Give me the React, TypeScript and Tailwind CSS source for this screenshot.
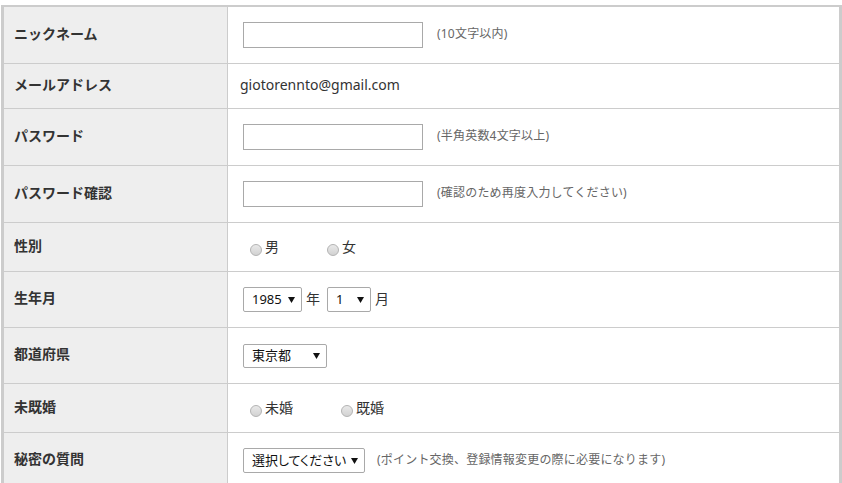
import React from "react";

const font = { fontFamily: '"Noto Sans", "Noto Sans CJK JP", sans-serif' };

function Arrow() {
  return (
    <svg width="7" height="6" viewBox="0 0 7 6" className="shrink-0">
      <polygon points="0,0 7,0 3.5,6" fill="#111" />
    </svg>
  );
}

function Select({ value, w, h = "h-[25px]", pal = false }: { value: string; w: string; h?: string; pal?: boolean }) {
  return (
    <div
      className={`${w} ${h} flex items-center justify-between pl-[8px] pr-[6px] border border-[#a9a9a9] rounded-[2px] bg-white text-[13px] text-[#111]`}
    >
      <span className={`leading-none whitespace-nowrap ${pal ? "[font-feature-settings:'palt']" : ""}`}>{value}</span>
      <Arrow />
    </div>
  );
}

function Radio({ label }: { label: string }) {
  return (
    <label className="flex items-center">
      <span className="w-[12px] h-[12px] rounded-full border border-[#b3b3b3] bg-gradient-to-b from-[#e9e9e9] to-[#d2d2d2] translate-y-[3px]" />
      <span className="ml-[3px] text-[14px] text-[#333] -translate-y-[1px]">{label}</span>
    </label>
  );
}

function TextInput() {
  return <div className="w-[180px] h-[26px] border border-[#a9a9a9] bg-white" />;
}

function Note({ children, ml = "ml-[14px]" }: { children: React.ReactNode; ml?: string }) {
  return <span className={`${ml} text-[12px] text-[#666] tracking-[0.2px] -translate-y-[1px]`}>{children}</span>;
}

const rows: { label: string; h: string; content: React.ReactNode }[] = [
  {
    label: "ニックネーム",
    h: "h-[57px]",
    content: (
      <>
        <TextInput />
        <Note>(10文字以内)</Note>
      </>
    ),
  },
  {
    label: "メールアドレス",
    h: "h-[45px]",
    content: <span className="-ml-[3px] text-[14px] text-[#333] -translate-y-[2px]">giotorennto@gmail.com</span>,
  },
  {
    label: "パスワード",
    h: "h-[57px]",
    content: (
      <>
        <TextInput />
        <Note>(半角英数4文字以上)</Note>
      </>
    ),
  },
  {
    label: "パスワード確認",
    h: "h-[57px]",
    content: (
      <>
        <TextInput />
        <Note>(確認のため再度入力してください)</Note>
      </>
    ),
  },
  {
    label: "性別",
    h: "h-[49px]",
    content: (
      <div className="flex items-center gap-[48px] pl-[7px]">
        <Radio label="男" />
        <Radio label="女" />
      </div>
    ),
  },
  {
    label: "生年月",
    h: "h-[56px]",
    content: (
      <>
        <Select value="1985" w="w-[59px]" />
        <span className="ml-[4px] text-[14px] text-[#333] -translate-y-[1px]">年</span>
        <div className="ml-[7px]">
          <Select value="1" w="w-[44px]" />
        </div>
        <span className="ml-[4px] text-[14px] text-[#333] -translate-y-[1px]">月</span>
      </>
    ),
  },
  {
    label: "都道府県",
    h: "h-[56px]",
    content: <Select value="東京都" w="w-[84px]" h="h-[24px]" />,
  },
  {
    label: "未既婚",
    h: "h-[49px]",
    content: (
      <div className="flex items-center gap-[48px] pl-[7px]">
        <Radio label="未婚" />
        <Radio label="既婚" />
      </div>
    ),
  },
  {
    label: "秘密の質問",
    h: "h-[56px]",
    content: (
      <>
        <Select value="選択してください" w="w-[122px]" pal />
        <Note ml="ml-[12px]">(ポイント交換、登録情報変更の際に必要になります)</Note>
      </>
    ),
  },
];

export default function App() {
  return (
    <div className="w-[842px] h-[483px] overflow-hidden bg-white pt-[5px] pl-[1px]" style={font}>
      <div className="w-[841px] border-t-2 border-l-[3px] border-r-[3px] border-[#cccccc]">
        {rows.map((r) => (
          <div key={r.label} className={`flex ${r.h} border-b border-[#cccccc]`}>
            <div className="w-[224px] shrink-0 bg-[#eeeeee] border-r border-[#cccccc] flex items-center pl-[10px] pb-[4px] text-[14px] font-bold text-[#333]">
              {r.label}
            </div>
            <div className="flex-1 flex items-center pl-[15px]">{r.content}</div>
          </div>
        ))}
      </div>
    </div>
  );
}
